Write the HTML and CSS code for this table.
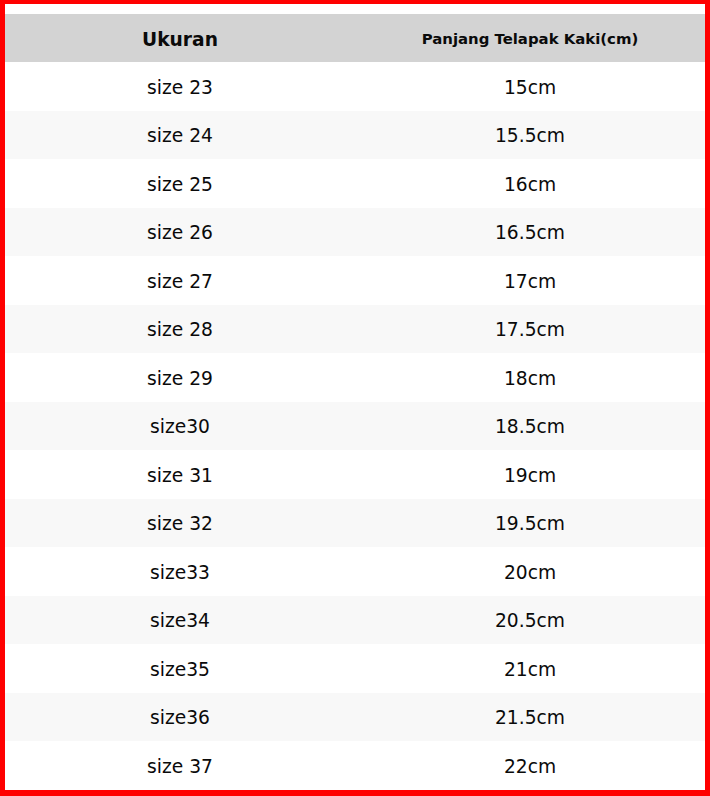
FILE: index.html
```html
<!DOCTYPE html>
<html>
<head>
<meta charset="utf-8">
<link rel="stylesheet" href="styles.css">
</head>
<body>
<div class="frame">
  <div class="table">
    <div class="row head"><div class="cell h1">Ukuran</div><div class="cell h2">Panjang Telapak Kaki(cm)</div></div>
    <div class="row"><div class="cell">size 23</div><div class="cell">15cm</div></div>
    <div class="row alt"><div class="cell">size 24</div><div class="cell">15.5cm</div></div>
    <div class="row"><div class="cell">size 25</div><div class="cell">16cm</div></div>
    <div class="row alt"><div class="cell">size 26</div><div class="cell">16.5cm</div></div>
    <div class="row"><div class="cell">size 27</div><div class="cell">17cm</div></div>
    <div class="row alt"><div class="cell">size 28</div><div class="cell">17.5cm</div></div>
    <div class="row"><div class="cell">size 29</div><div class="cell">18cm</div></div>
    <div class="row alt"><div class="cell">size30</div><div class="cell">18.5cm</div></div>
    <div class="row"><div class="cell">size 31</div><div class="cell">19cm</div></div>
    <div class="row alt"><div class="cell">size 32</div><div class="cell">19.5cm</div></div>
    <div class="row"><div class="cell">size33</div><div class="cell">20cm</div></div>
    <div class="row alt"><div class="cell">size34</div><div class="cell">20.5cm</div></div>
    <div class="row"><div class="cell">size35</div><div class="cell">21cm</div></div>
    <div class="row alt"><div class="cell">size36</div><div class="cell">21.5cm</div></div>
    <div class="row"><div class="cell">size 37</div><div class="cell">22cm</div></div>
  </div>
</div>
</body>
</html>
```
FILE: styles.css
```css
html, body {
  margin: 0;
  padding: 0;
  background: #ffffff;
}
.frame {
  box-sizing: border-box;
  width: 710px;
  height: 796px;
  border-style: solid;
  border-color: #ff0000;
  border-width: 4px 5px 6px 5px;
  padding-top: 10px;
  font-family: "DejaVu Sans", sans-serif;
  color: #0a0a0a;
}
.table {
  display: grid;
  grid-template-rows: 48px repeat(15, 48.53px);
}
.row {
  display: grid;
  grid-template-columns: 350px 350px;
  align-items: center;
}
.cell {
  text-align: center;
  font-size: 18.67px;
  padding-top: 2px;
}
.head {
  background: #d3d3d3;
}
.h1 {
  font-weight: bold;
  font-size: 18.67px;
}
.h2 {
  font-weight: bold;
  font-size: 14.9px;
}
.alt {
  background: #f8f8f8;
}
```
